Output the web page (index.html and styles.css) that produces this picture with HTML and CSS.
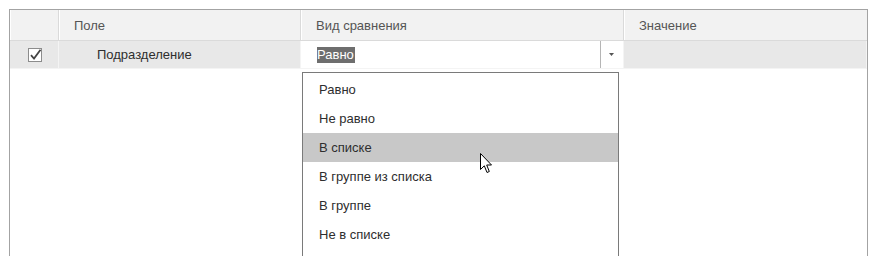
FILE: index.html
```html
<!DOCTYPE html>
<html>
<head>
<meta charset="utf-8">
<link rel="stylesheet" href="styles.css">
</head>
<body>
<div class="table">
  <div class="row head">
    <div class="cell c1"></div>
    <div class="cell c2"><span class="htext">Поле</span></div>
    <div class="cell c3"><span class="htext">Вид сравнения</span></div>
    <div class="cell c4"><span class="htext">Значение</span></div>
  </div>
  <div class="row data">
    <div class="cell c1">
      <span class="check">
        <svg width="14" height="14" viewBox="0 0 14 14"><rect x="0.5" y="0.5" width="13" height="13" fill="#fff" stroke="#8c8c8c"/><path d="M3 7.2 L6 10.5 L12.5 1.8" fill="none" stroke="#444" stroke-width="1.8"/></svg>
      </span>
    </div>
    <div class="cell c2"><span class="field">Подразделение</span></div>
    <div class="cell c3 combo">
      <span class="input"><span class="sel">Равно</span></span>
      <span class="btn"><svg width="6" height="4" viewBox="0 0 6 4"><path d="M0 0 H5 L2.5 3 Z" fill="#555"/></svg></span>
    </div>
    <div class="cell c4"></div>
  </div>
</div>
<div class="list">
  <div class="item">Равно</div>
  <div class="item">Не равно</div>
  <div class="item active">В списке</div>
  <div class="item">В группе из списка</div>
  <div class="item">В группе</div>
  <div class="item">Не в списке</div>
</div>
<svg class="cursor" width="13" height="21" viewBox="0 0 13 21"><path d="M0.5 0.5 V16.5 L4.3 12.8 L7 19.5 L9.3 18.5 L6.7 12 H11.5 Z" fill="#fff" stroke="#000" stroke-width="1"/></svg>
</body>
</html>
```
FILE: styles.css
```css
html, body {
  margin: 0;
  padding: 0;
  background: #fff;
  height: 256px;
  overflow: hidden;
}
body {
  position: relative;
  font-family: "Liberation Sans", Arial, sans-serif;
  font-size: 13px;
  color: #333;
}
.table {
  margin: 9px 0 0 9px;
  width: 857px;
  height: 247px;
  border: 1px solid #a3a3a3;
  border-bottom: none;
}
.row {
  display: grid;
  grid-template-columns: 49px 242px 323px 243px;
}
.head {
  height: 30px;
  background: #f2f2f2;
  border-bottom: 1px solid #dadada;
  color: #555;
}
.head .cell {
  border-right: 1px solid #dadada;
  box-shadow: inset 1px 0 0 #fff;
  display: flex;
  align-items: center;
}
.head .cell:last-child { border-right: none; }
.htext { padding-left: 15px; }
.data {
  height: 27px;
  background: #e8e8e8;
  border-bottom: 1px solid #f4f4f4;
}
.data .cell {
  display: flex;
  align-items: center;
  border-right: 1px solid #f4f4f4;
}
.data .c1 { justify-content: center; padding-left: 1px; }
.check { display: flex; }
.field { padding-left: 38px; color: #2e2e2e; }
.data .combo {
  background: #fff;
  display: flex;
  align-items: stretch;
}
.combo .input {
  flex: 1;
  display: flex;
  align-items: center;
  padding-left: 16px;
}
.sel {
  background: #6e6e6e;
  color: #fff;
  line-height: 16px;
  padding: 0 1px 0 0;
}
.btn {
  width: 22px;
  border-left: 1px solid #b5b5b5;
  display: flex;
  align-items: center;
  justify-content: center;
}
.list {
  position: absolute;
  left: 302px;
  top: 72px;
  width: 317px;
  height: 184px;
  border: 1px solid #7a7a7a;
  border-bottom: none;
  background: #fff;
  padding-top: 2px;
  box-sizing: border-box;
}
.item {
  height: 29px;
  line-height: 29px;
  padding-left: 16px;
  color: #2e2e2e;
}
.item.active { background: #c8c8c8; }
.cursor {
  position: absolute;
  left: 480px;
  top: 153px;
}
```
